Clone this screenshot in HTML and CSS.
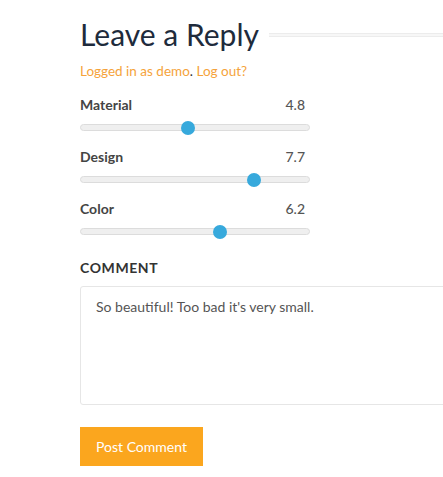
FILE: index.html
```html
<!DOCTYPE html>
<html>
<head>
<meta charset="utf-8">
<link rel="stylesheet" href="styles.css">
</head>
<body>
<section class="reply">
  <div class="reply-head">
    <h2 class="reply-title">Leave a Reply</h2>
    <span class="reply-rule"></span>
  </div>
  <p class="logged"><a href="#">Logged in as demo</a>. <a href="#">Log out?</a></p>

  <div class="ratings">
    <div class="rating">
      <div class="rating-top"><span class="rating-name">Material</span><span class="rating-val">4.8</span></div>
      <div class="track"><span class="thumb" style="left:107px"></span></div>
    </div>
    <div class="rating">
      <div class="rating-top"><span class="rating-name">Design</span><span class="rating-val">7.7</span></div>
      <div class="track"><span class="thumb" style="left:173px"></span></div>
    </div>
    <div class="rating">
      <div class="rating-top"><span class="rating-name">Color</span><span class="rating-val">6.2</span></div>
      <div class="track"><span class="thumb" style="left:139px"></span></div>
    </div>
  </div>

  <label class="comment-label">COMMENT</label>
  <div class="comment-box">So beautiful! Too bad it's very small.</div>
  <button class="submit">Post Comment</button>
</section>
</body>
</html>
```

FILE: styles.css
```css
html, body { margin: 0; padding: 0; background: #fff; }
body { font-family: Lato, "Open Sans", sans-serif; overflow: hidden; }
.reply { padding: 15px 0 0 80px; }
.reply-head { display: flex; align-items: center; gap: 10px; }
.reply-title { margin: 0; font-weight: 400; font-size: 30px; line-height: 38px; color: #1e2b3c; white-space: nowrap; }
.reply-rule { flex: 1; height: 2px; border-top: 1px solid #ececec; border-bottom: 1px solid #ececec; background: #f7f7f7; margin-top: 2px; }
.logged { margin: 8px 0 0; font-size: 13.5px; line-height: 20px; color: #333; }
.logged a { color: #f5a33b; text-decoration: none; }
.ratings { margin-top: 15px; width: 230px; display: flex; flex-direction: column; gap: 17px; }
.rating-top { display: flex; justify-content: space-between; font-size: 14px; line-height: 18px; color: #444; padding-right: 5px; }
.rating-name { font-weight: 700; }
.rating-val { font-weight: 500; color: #555; }
.track { position: relative; margin-top: 10px; height: 5px; border: 1px solid #dcdcdc; border-radius: 4px; background: #efefef; }
.thumb { position: absolute; top: 50%; width: 14px; height: 14px; margin-left: -7px; transform: translateY(-50%); border-radius: 50%; background: #37a9dc; }
.comment-label { display: block; margin-top: 24px; font-size: 14px; font-weight: 700; letter-spacing: 0.6px; color: #333; line-height: 18px; }
.comment-box { box-sizing: border-box; margin-top: 9px; width: 400px; height: 119px; border: 1px solid #e6e6e6; border-radius: 3px; padding: 10px 15px; font-size: 14px; line-height: 20px; color: #555; }
.submit { display: block; margin-top: 22px; background: #fba61e; color: #fff; border: 0; font-family: Lato, sans-serif; font-size: 14px; height: 39px; padding: 0 16px; }
```
